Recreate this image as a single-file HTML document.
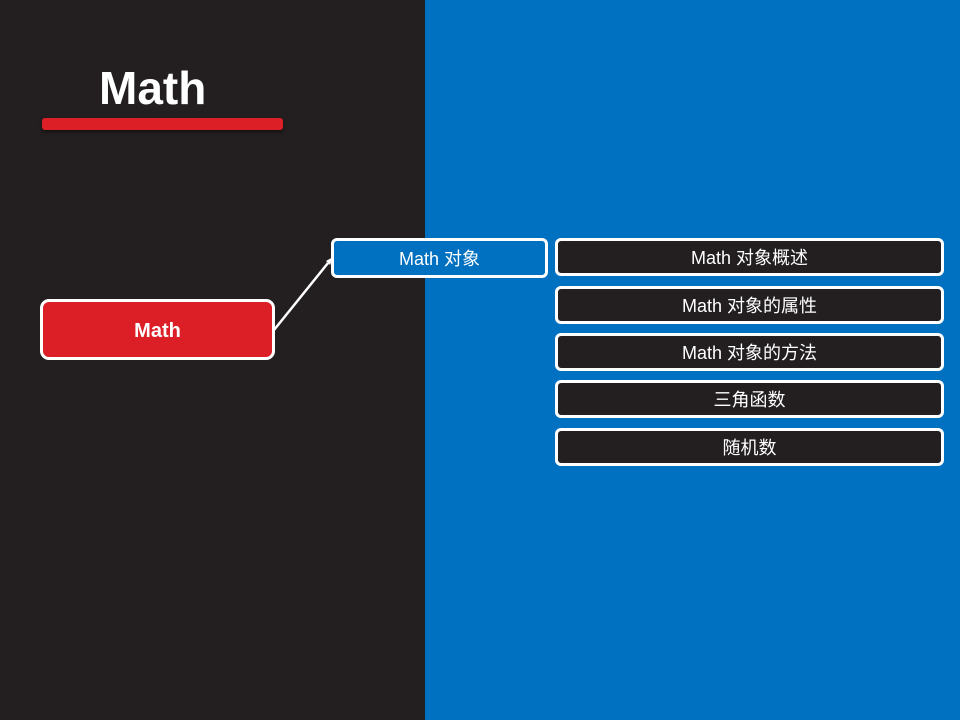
<!DOCTYPE html>
<html><head><meta charset="utf-8"><style>
body{margin:0;width:960px;height:720px;position:relative;overflow:hidden;background:#0070c0;font-family:"Liberation Sans","Noto Sans CJK SC",sans-serif;}
.left{position:absolute;left:0;top:0;width:425px;height:720px;background:#231f20;}
.title{position:absolute;left:99px;top:61px;font-size:46px;font-weight:bold;color:#fff;}
.bar{position:absolute;left:42px;top:118px;width:241px;height:12px;background:#dc1f26;border-radius:3px;box-shadow:0 2px 3px rgba(0,0,0,.5);}
.box{position:absolute;box-sizing:border-box;border:3px solid #fff;border-radius:6px;color:#fff;display:flex;align-items:center;justify-content:center;font-size:18px;}
.d{background:#231f20;left:555px;width:389px;height:38px;}
</style></head><body>
<div class="left"></div>
<div class="title">Math</div>
<div class="bar"></div>
<svg style="position:absolute;left:0;top:0" width="960" height="720"><line x1="274" y1="330" x2="328" y2="263" stroke="#fff" stroke-width="2.5"/><polygon points="333,257 326,261 330,265" fill="#fff"/></svg>
<div class="box" style="left:40px;top:299px;width:235px;height:61px;background:#dc1f26;font-weight:bold;font-size:20px;border-radius:9px;padding-top:4px;">Math</div>
<div class="box" style="left:331px;top:238px;width:217px;height:40px;background:#0070c0;">Math 对象</div>
<div class="box d" style="top:238px;">Math 对象概述</div>
<div class="box d" style="top:286px;">Math 对象的属性</div>
<div class="box d" style="top:333px;">Math 对象的方法</div>
<div class="box d" style="top:380px;">三角函数</div>
<div class="box d" style="top:428px;">随机数</div>
</body></html>
